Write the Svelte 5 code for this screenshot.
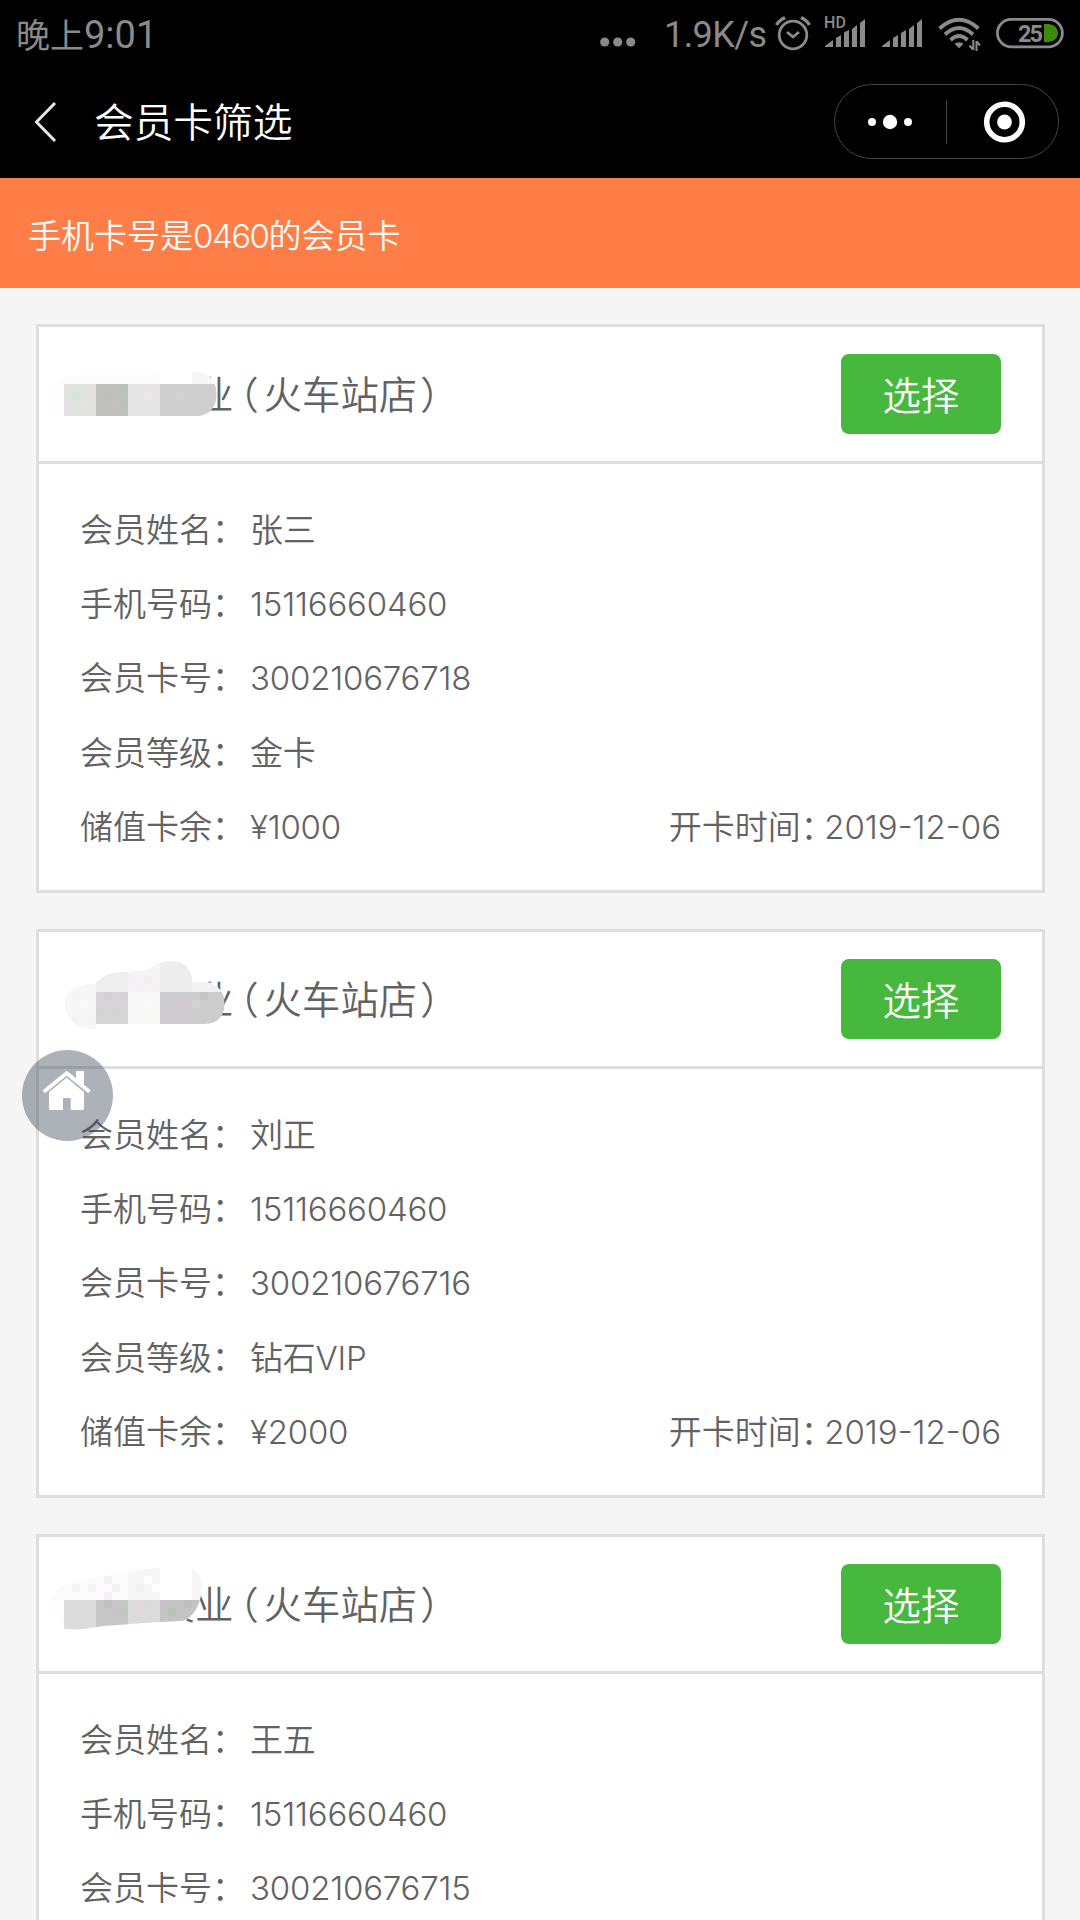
<script>
    const cards = [
        {
            store: '业',
            branch: '火车站店',
            rows: [
                ['会员姓名', '张三'],
                ['手机号码', '15116660460'],
                ['会员卡号', '300210676718'],
                ['会员等级', '金卡'],
                ['储值卡余', '¥1000']
            ],
            opened: '2019-12-06',
            mask: {
                shape: 'M25 235 C24 190 40 160 75 157 L250 155 L420 146 C450 142 480 145 495 156 C512 170 520 195 517 222 C514 250 497 272 465 276 L60 276 L40 278 Z',
                cells: [
                    [0, 100, 348, 80, '#fcfafb'], [348, 100, 96, 80, '#ffffff'], [444, 100, 100, 80, '#f7f6f7'],
                    [20, 180, 40, 100, '#fefcfd'], [60, 180, 96, 96, '#dfe2df'], [156, 180, 96, 96, '#bfc1bf'],
                    [252, 180, 96, 96, '#e6e6e6'], [348, 180, 180, 96, '#cfcfcf'],
                    [60, 228, 24, 48, '#e4e0e3'], [84, 204, 24, 24, '#d9e2da'], [108, 228, 24, 24, '#e5e3e5'], [132, 204, 24, 24, '#e4e0e3'],
                    [180, 204, 24, 24, '#c3bac0'], [204, 228, 24, 24, '#c8bec5'], [228, 180, 24, 24, '#b7c2b8'], [228, 228, 24, 24, '#b7c2b8'],
                    [300, 204, 24, 24, '#f0e5ea'], [276, 228, 24, 24, '#dfe8e2'], [324, 228, 24, 24, '#dfe8e2'], [396, 204, 24, 24, '#d3d3d3']
                ]
            }
        },
        {
            store: '业',
            branch: '火车站店',
            rows: [
                ['会员姓名', '刘正'],
                ['手机号码', '15116660460'],
                ['会员卡号', '300210676716'],
                ['会员等级', '钻石VIP'],
                ['储值卡余', '¥2000']
            ],
            opened: '2019-12-06',
            mask: {
                shape: 'M62 230 C62 185 95 162 155 164 C175 134 208 128 250 129 L310 122 C335 104 360 96 388 96 C425 98 444 125 445 160 L480 158 C520 160 542 190 542 222 C542 260 522 285 480 285 L156 285 L156 299 L125 299 C90 290 66 265 62 230 Z',
                cells: [
                    [50, 90, 106, 220, '#f8f7f8'], [156, 90, 96, 99, '#efeeef'], [252, 90, 96, 99, '#f6f4f6'],
                    [348, 90, 96, 99, '#ededed'], [444, 90, 110, 99, '#f3f2f3'],
                    [156, 189, 96, 96, '#d9d6d9'], [252, 189, 96, 96, '#f6f9f6'], [348, 189, 96, 96, '#cdcbcd'], [444, 189, 110, 96, '#cccccc'],
                    [84, 189, 24, 24, '#f3f5f3'], [108, 213, 24, 24, '#fcf9fb'], [84, 261, 24, 24, '#f3f5f3'], [132, 261, 24, 24, '#f3f5f3'],
                    [252, 141, 24, 24, '#f8eff6'], [300, 141, 24, 24, '#eaf1e7'], [276, 165, 24, 24, '#f8eff6'], [324, 165, 24, 24, '#f8eff6'],
                    [180, 189, 24, 24, '#d2cfd2'], [228, 189, 24, 24, '#d7cfd9'], [156, 237, 24, 24, '#d0d5cf'], [204, 237, 24, 24, '#d0d5cf'],
                    [300, 213, 24, 24, '#fff9fd'], [396, 213, 24, 24, '#d2c9cf'], [468, 189, 24, 24, '#c6c6c6'], [444, 213, 24, 24, '#d3d3d3']
                ]
            }
        },
        {
            store: '业',
            branch: '火车站店',
            rows: [
                ['会员姓名', '王五'],
                ['手机号码', '15116660460'],
                ['会员卡号', '300210676715']
            ],
            mask: {
                shape: 'M25 240 C22 195 32 162 60 150 L200 120 L320 104 L400 96 L445 104 C465 115 475 135 474 158 C472 210 450 248 418 260 L300 267 L180 276 L100 287 L60 284 Z',
                tail: 'M428 257 L446 263',
                cells: [
                    [0, 90, 252, 108, '#fcfafb'], [252, 90, 96, 108, '#f7f5f7'], [348, 90, 96, 108, '#ffffff'], [444, 90, 40, 108, '#f8f5f6'],
                    [20, 198, 40, 100, '#fefcfd'], [60, 198, 96, 100, '#dddcdd'], [156, 198, 96, 100, '#c7c7c7'],
                    [252, 198, 96, 100, '#dcdadc'], [348, 198, 130, 100, '#c3c4c3'],
                    [84, 150, 24, 24, '#f2f6f2'], [132, 150, 24, 24, '#f2f6f2'], [180, 126, 24, 24, '#f0f5f0'], [180, 174, 24, 24, '#f6eff5'], [204, 150, 24, 24, '#f0f5f0'],
                    [300, 126, 24, 24, '#ffffff'], [276, 150, 24, 24, '#edf3ed'], [324, 150, 24, 24, '#ffffff'],
                    [180, 198, 24, 24, '#bfbfbf'], [204, 222, 24, 24, '#cbc2ca'], [228, 222, 24, 24, '#bdc7bd'], [276, 222, 24, 24, '#e1d8de'],
                    [300, 198, 24, 24, '#d5ddd5'], [372, 222, 24, 24, '#b9c1b9'], [420, 198, 24, 24, '#b9c1b9']
                ]
            }
        }
    ];
</script>

{#snippet bars()}
    <path d="M0 43 V42 L8 36 V43 Z M11 43 V34 L16 31 V43 Z M19 43 V29 L24 26 V43 Z M27 43 V25 L32 21 V43 Z M35 43 V19 L40 15 V43 Z" />
{/snippet}

<div class="phone">
    <header>
        <div class="status">
            <span class="time">晚上<span class="digits">9:01</span></span>
            <svg class="more" width="36" height="60">
                <circle cx="4.7" cy="42" r="4.6" />
                <circle cx="17.7" cy="42" r="4.6" />
                <circle cx="30.7" cy="42" r="4.6" />
            </svg>
            <span class="speed">1.9K/s</span>
            <svg class="alarm" width="36" height="60" fill="none" stroke="#8a8a8a">
                <circle cx="18" cy="35" r="13.8" stroke-width="2.8" />
                <path d="M1.5 25 Q4 20.5 10 17.5 M34.5 25 Q32 20.5 26 17.5" stroke-width="3.4" />
                <path d="M12 32 L18 37 L24 32" stroke-width="2.8" />
            </svg>
            <svg class="signal" width="42" height="60">
                <g transform="translate(1 4)">{@render bars()}</g>
                <path d="M0 14 H23 V29.5 L17 34 H0 Z" fill="#000" />
                <path d="M20 35 V32.5 L25 30 V35 Z" />
                <text x="0" y="28" font-size="16" font-weight="500" textLength="22">HD</text>
            </svg>
            <svg class="signal" width="42" height="60">
                <g transform="translate(1 4)">{@render bars()}</g>
            </svg>
            <svg class="wifi" width="44" height="60" fill="none" stroke="#8a8a8a" stroke-width="3.8">
                <path d="M1.5 28.5 Q21 11 40.5 28.5" />
                <path d="M7 34.5 Q21 21.5 35 34.5" />
                <path d="M12.5 40 Q21 32 29.5 40" />
                <path d="M16.5 43.8 Q21 40.5 25.5 43.8 L21 48.2 Z" fill="#8a8a8a" stroke="none" />
                <path d="M35.3 40 V50 M31.5 45.5 L35 49.5 M38.5 51 V41 M38.7 41.5 L42 45.5" stroke-width="2" />
            </svg>
            <svg class="battery" width="68" height="60">
                <rect x="1.4" y="19.4" width="65" height="27.4" rx="13.7" fill="none" stroke="#8a8a8a" stroke-width="2.8" />
                <path d="M48 24 H53 Q61.5 25 62 33 Q61.5 41 53 42 H48 Z" fill="#3c8c0c" />
                <text x="22" y="41.5" font-size="23.5" font-weight="700" textLength="25">25</text>
            </svg>
        </div>
        <div class="nav">
            <svg class="back" width="24" height="44" fill="none" stroke="#e8e8e8" stroke-width="3">
                <path d="M21 3 L2.5 22 L21 41" />
            </svg>
            <h1>会员卡筛选</h1>
            <div class="capsule">
                <svg width="111" height="73" fill="#fff">
                    <circle cx="37" cy="37" r="4" />
                    <circle cx="55" cy="37" r="7.2" />
                    <circle cx="73" cy="37" r="4" />
                </svg>
                <i></i>
                <svg width="111" height="73" fill="#fff">
                    <circle cx="57.5" cy="37" r="17.8" fill="none" stroke="#fff" stroke-width="5.6" />
                    <circle cx="57.5" cy="37" r="7.4" />
                </svg>
            </div>
        </div>
    </header>

    <div class="notice">手机卡号是<span class="num">0460</span>的会员卡</div>

    <main>
        {#each cards as card, i}
        <section class="card">
            <div class="card-header">
                <div class="name">{card.store}<span class="open">（</span>{card.branch}<span class="close">）</span></div>
                <svg class="mask" viewBox="0 0 600 411">
                    <clipPath id="mask-{i}"><path d={card.mask.shape} /></clipPath>
                    <g clip-path="url(#mask-{i})" shape-rendering="crispEdges">
                        {#each card.mask.cells as [x, y, w, h, fill]}
                        <rect {x} {y} width={w} height={h} {fill} />
                        {/each}
                    </g>
                    {#if card.mask.tail}
                    <path d={card.mask.tail} stroke="#666" stroke-width="7" />
                    {/if}
                </svg>
                <button>选择</button>
            </div>
            <div class="card-body">
                {#each card.rows as [label, value], n}
                <div class="row">
                    <span class="label">{label}：</span>
                    <span class="value">{value}</span>
                    {#if n === 4}
                    <span class="opened">开卡时间<span class="colon">：</span>{card.opened}</span>
                    {/if}
                </div>
                {/each}
            </div>
        </section>
        {/each}
    </main>

    <div class="home">
        <svg width="91" height="91" viewBox="0 0 273 273" fill="#fff">
            <path d="M62 121 L134 62 L162 85 V63 H186 V104 L206 121 L199 130 L134 77 L69 130 Z" />
            <path d="M81 126 L134 83 L186 126 V176 Q186 180 182 180 H146 V144 H123 V180 H85 Q81 180 81 176 Z" />
        </svg>
    </div>
</div>

<style>
    :global(body) {
        background: #f5f5f5;
    }

    .phone {
        position: relative;
        width: 1080px;
        height: 1920px;
        overflow: hidden;
        background: #f5f5f5;
        color: #626262;
        font-family: Inter, "Noto Sans CJK SC", sans-serif;
        font-weight: 350;
    }

    svg {
        display: block;
        flex: none;
    }

    header {
        height: 178px;
        background: #000;
    }

    .status {
        display: flex;
        height: 66px;
        padding: 0 16px;
        line-height: 70px;
        color: #8a8a8a;
        fill: #8a8a8a;
        font-family: Roboto, "Noto Sans CJK SC", sans-serif;
        font-weight: 400;
    }

    .time {
        flex: 1;
        font-size: 34px;
    }

    .digits {
        font-size: 38px;
    }

    .more {
        margin-right: 28px;
    }

    .speed {
        width: 102px;
        font-size: 36px;
        letter-spacing: -0.6px;
        white-space: nowrap;
    }

    .alarm {
        margin: 0 13px 0 9px;
    }

    .signal {
        margin-right: 15px;
    }

    .wifi {
        margin-right: 14px;
    }

    .nav {
        display: flex;
        align-items: center;
        height: 111px;
        padding: 0 21px 0 34px;
    }

    h1 {
        flex: 1;
        margin: 0 0 4px 36px;
        color: #fff;
        font-size: 39.7px;
        font-weight: 350;
    }

    .capsule {
        display: flex;
        align-items: center;
        box-sizing: border-box;
        width: 225px;
        height: 75px;
        border: 1px solid #454545;
        border-radius: 38px;
    }

    .capsule i {
        width: 1px;
        height: 44px;
        background: #454545;
    }

    .notice {
        height: 110px;
        padding-left: 28px;
        background: #ff7d46;
        color: #fff;
        font-size: 33px;
        line-height: 116px;
    }

    .num {
        letter-spacing: -1.5px;
    }

    main {
        display: flex;
        flex-direction: column;
        gap: 36px;
        padding: 36px 35px 0 36px;
    }

    .card {
        flex: none;
        box-sizing: border-box;
        height: 569px;
        border: 3px solid #dedede;
        background: #fff;
    }

    .card-header {
        position: relative;
        display: flex;
        align-items: center;
        justify-content: space-between;
        height: 134px;
        padding: 0 41px 0 156px;
        border-bottom: 3px solid #dedede;
    }

    .name {
        margin-bottom: 4px;
        font-size: 38.4px;
    }

    .open,
    .close,
    .colon {
        font-family: "Noto Sans CJK SC", sans-serif;
        font-feature-settings: "halt";
        line-height: 1;
    }

    .open {
        margin: 0 5px 0 6px;
    }

    .close {
        margin-left: 3px;
    }

    .colon {
        margin-right: 7px;
    }

    .mask {
        position: absolute;
        left: 5px;
        top: -3px;
        width: 200px;
        height: 137px;
    }

    button {
        width: 160px;
        height: 80px;
        padding: 0 0 3px;
        border: 0;
        border-radius: 8px;
        background: #46b83e;
        color: #fff;
        font-family: inherit;
        font-size: 38.4px;
        font-weight: 350;
    }

    .card-body {
        padding: 29px 41px 0;
    }

    .row {
        display: flex;
        height: 74.2px;
        font-size: 33px;
        line-height: 74px;
        white-space: nowrap;
    }

    .label {
        width: 170px;
    }

    .value {
        letter-spacing: -0.2px;
    }

    .opened {
        margin-left: auto;
    }

    .home {
        position: absolute;
        left: 22px;
        top: 1050px;
        width: 91px;
        height: 91px;
        border-radius: 50%;
        background: rgba(60, 70, 85, 0.42);
    }
</style>
